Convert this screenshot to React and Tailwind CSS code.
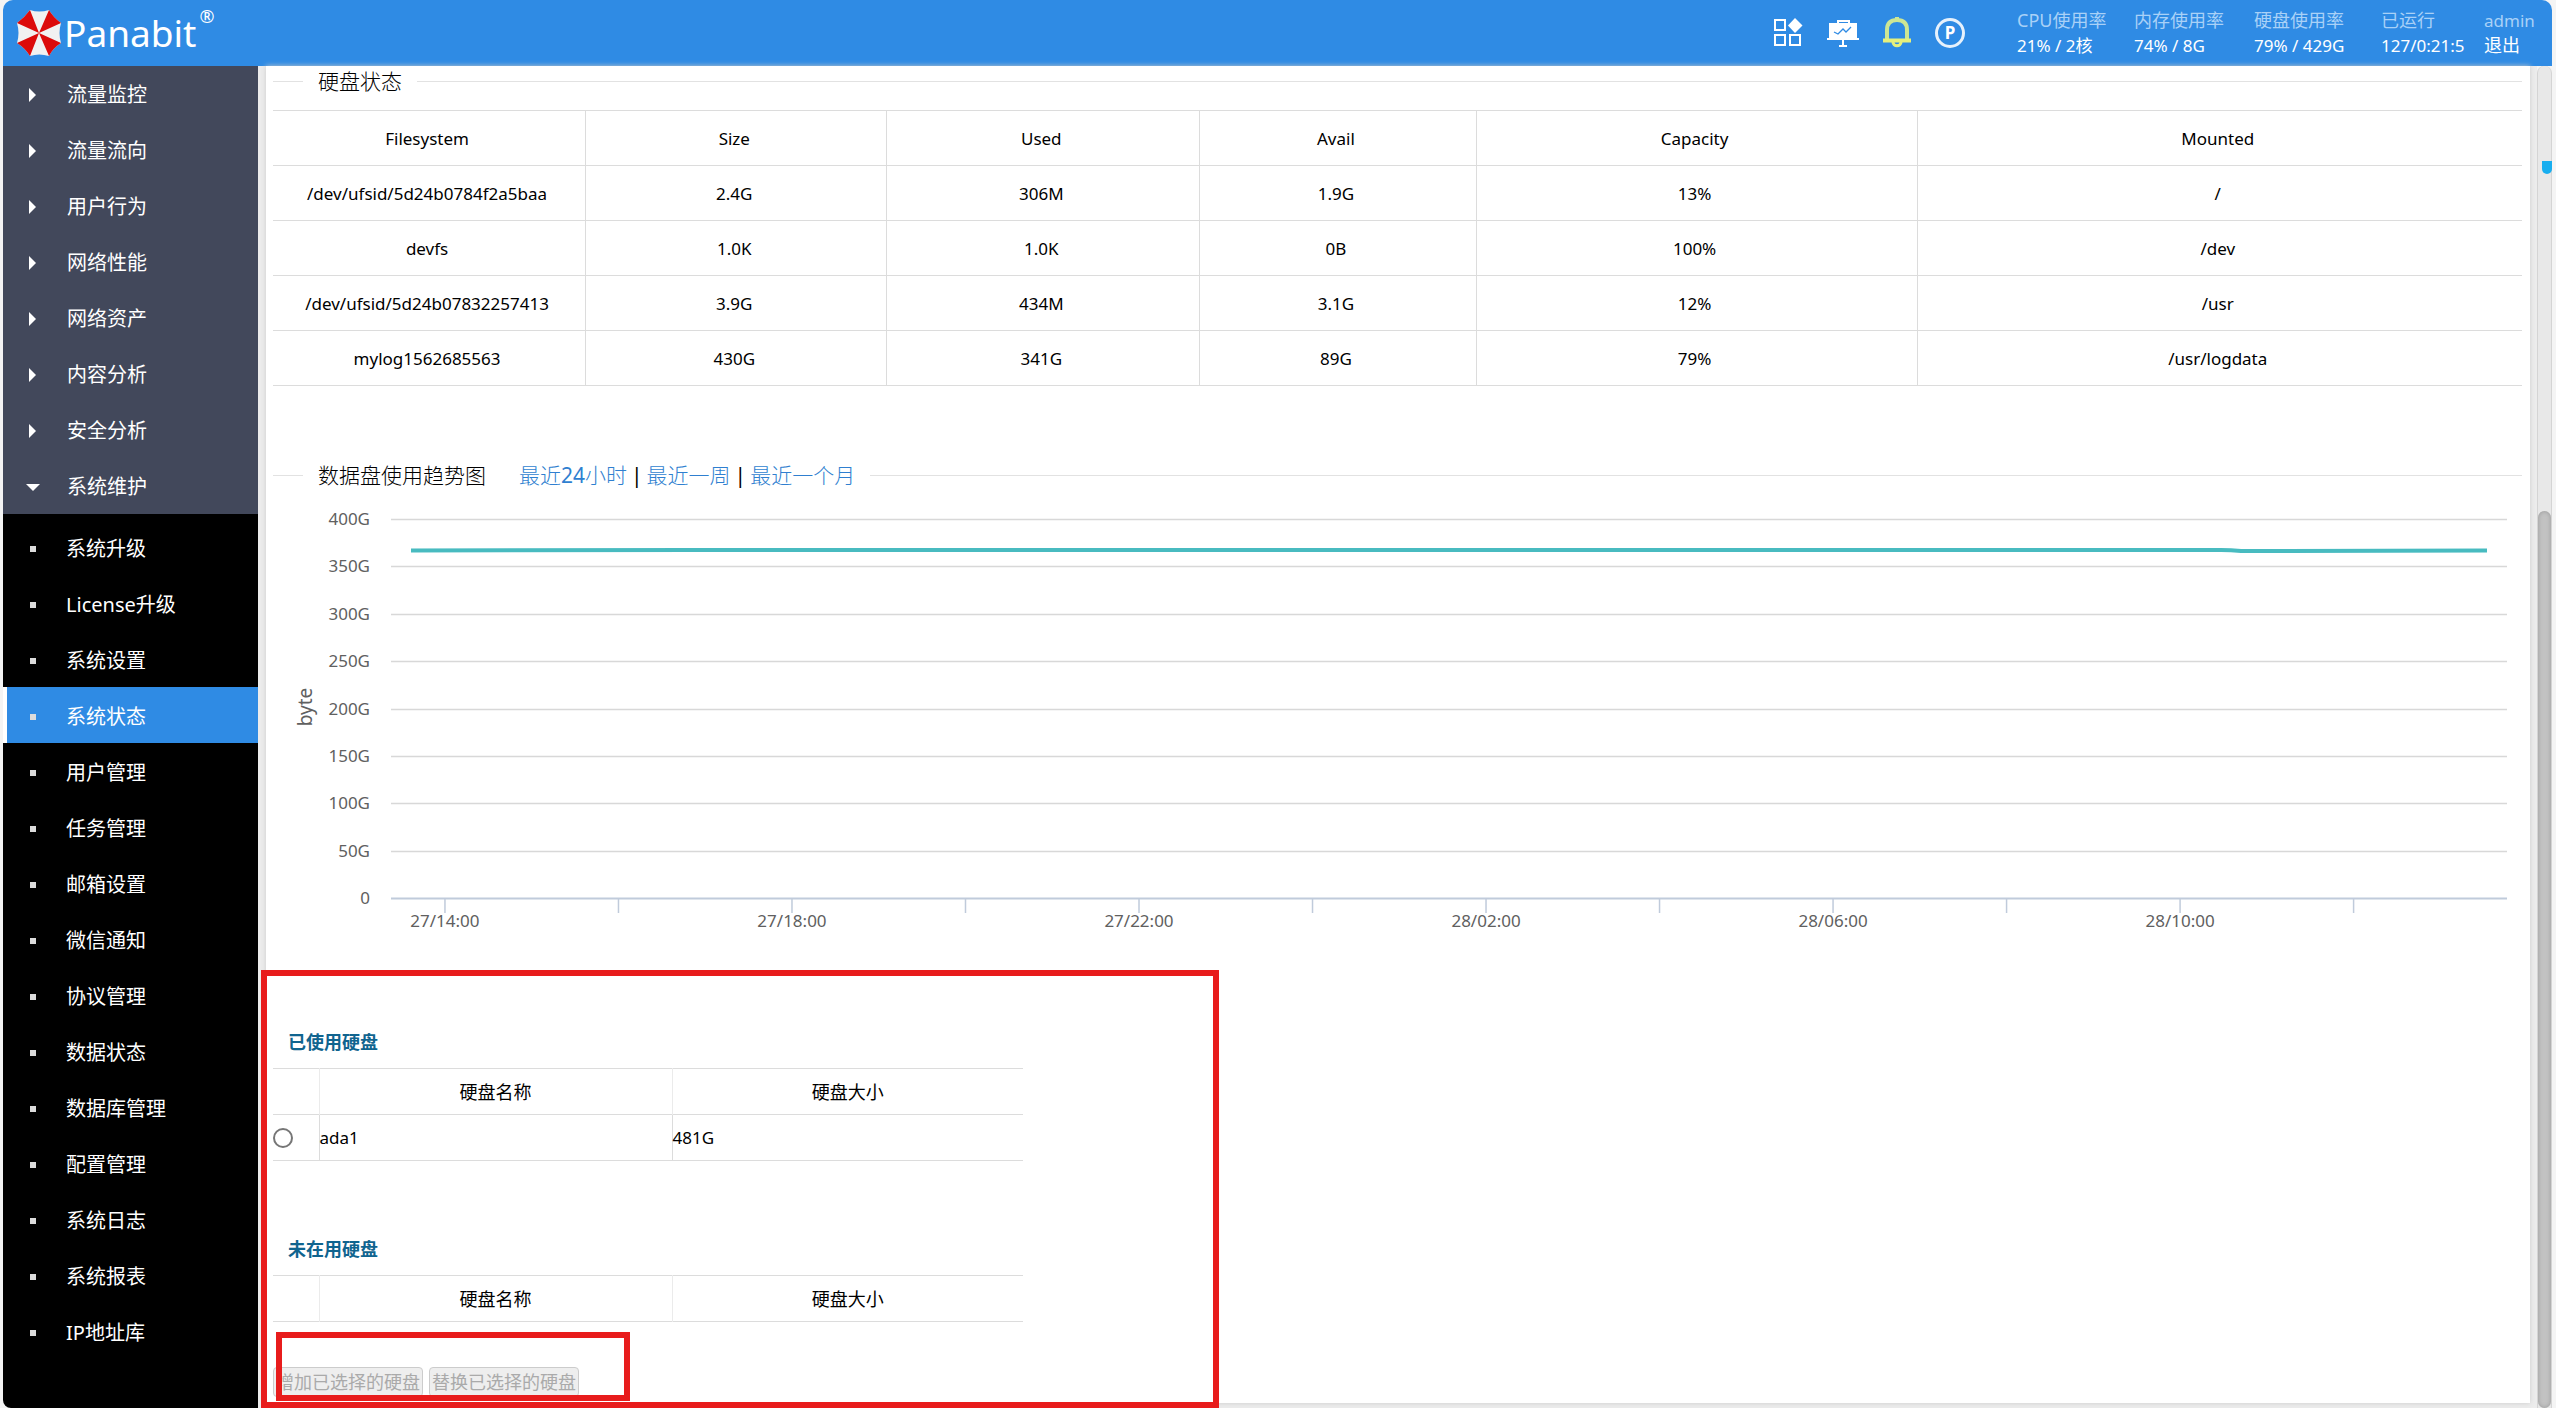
import { useState } from "react";

const menuGroups = ["流量监控", "流量流向", "用户行为", "网络性能", "网络资产", "内容分析", "安全分析", "系统维护"];

const subMenus = [
  "系统升级", "License升级", "系统设置", "系统状态", "用户管理", "任务管理", "邮箱设置", "微信通知",
  "协议管理", "数据状态", "数据库管理", "配置管理", "系统日志", "系统报表", "IP地址库",
];

const stats = [
  { label: "CPU使用率", value: "21% / 2核", width: "w-[117px]" },
  { label: "内存使用率", value: "74% / 8G", width: "w-[120px]" },
  { label: "硬盘使用率", value: "79% / 429G", width: "w-[127px]" },
  { label: "已运行", value: "127/0:21:5", width: "w-[103px]" },
];

const diskColumns = [
  { name: "Filesystem", width: "w-[13.9%]" },
  { name: "Size", width: "w-[13.4%]" },
  { name: "Used", width: "w-[13.9%]" },
  { name: "Avail", width: "w-[12.3%]" },
  { name: "Capacity", width: "w-[19.6%]" },
  { name: "Mounted", width: "" },
];

const diskRows = [
  ["/dev/ufsid/5d24b0784f2a5baa", "2.4G", "306M", "1.9G", "13%", "/"],
  ["devfs", "1.0K", "1.0K", "0B", "100%", "/dev"],
  ["/dev/ufsid/5d24b07832257413", "3.9G", "434M", "3.1G", "12%", "/usr"],
  ["mylog1562685563", "430G", "341G", "89G", "79%", "/usr/logdata"],
];

const yLabels = ["400G", "350G", "300G", "250G", "200G", "150G", "100G", "50G", "0"];
const xLabels = ["27/14:00", "", "27/18:00", "", "27/22:00", "", "28/02:00", "", "28/06:00", "", "28/10:00", ""];

// y of a grid line inside the chart
const gridY = (i) => Math.round(29 + i * 47.4) + 0.5;

function Logo() {
  return (
    <div className="flex items-center">
      <svg width="46" height="48" viewBox="0 0 46 48">
        <path d="M14 1Q23 4 33 1Q37 8 45 14Q42 24 45 34Q37 39 33 47Q23 44 14 47Q9 39 1 34Q4 24 1 14Q9 8 14 1Z" fill="#f1f1f1" />
        <g fill="#dc0a0a">
          <path d="M23 24L14 1Q9 8 1 14Z" />
          <path d="M23 24L33 1Q37 8 45 14Z" />
          <path d="M23 24L45 34Q37 39 33 47Z" />
          <path d="M23 24L1 34Q9 39 14 47Z" />
        </g>
      </svg>
      <span className="ml-[2px] text-[37px] leading-[48px]">Panabit</span>
      <span className="ml-[3px] self-start text-[18px] leading-[14px]">®</span>
    </div>
  );
}

function HeaderIcons() {
  return (
    <div className="flex items-center gap-[23px]">
      <button type="button" aria-label="应用">
        <svg width="31" height="32" viewBox="0 0 31 32" fill="none" stroke="#fff" strokeWidth="2">
          <rect x="2" y="3" width="10" height="10" />
          <rect x="2" y="18" width="10" height="10" />
          <rect x="17" y="18" width="10" height="10" />
          <path d="M22 1L29.500 8.500L22 16L15 8.500Z" fill="#fff" stroke="none" />
        </svg>
      </button>
      <button type="button" aria-label="大屏">
        <svg width="32" height="32" viewBox="0 0 32 32" fill="none">
          <path d="M11 6V4H22V6" stroke="#fff" strokeWidth="2" />
          <path d="M2 6H30V21H32V23H0V21H2Z" fill="#fff" />
          <path d="M16 23V29M12 29H20" stroke="#fff" strokeWidth="2" />
          <path d="M7 15L11 17L16 12L19 15L24 10" stroke="#2f8be4" strokeWidth="1.300" />
        </svg>
      </button>
      <button type="button" aria-label="告警">
        <svg width="30" height="32" viewBox="0 0 30 32" fill="none" stroke="#cde694">
          <path d="M5 23V13C5 6 9 3 15 3S25 6 25 13V23" strokeWidth="4" />
          <path d="M15 0V3" strokeWidth="4" />
          <path d="M1 23.500H29" stroke="#e6f07c" strokeWidth="4" />
          <path d="M11 25C11 30 19 30 19 25" stroke="#e6f07c" strokeWidth="3" />
        </svg>
      </button>
      <button type="button" aria-label="Panabit" className="size-[30px] rounded-full border-[3px] border-[#e6f1fc] text-[17px] leading-[24px] font-bold">
        P
      </button>
    </div>
  );
}

function Header() {
  return (
    <header className="flex h-[66px] items-center justify-between rounded-t-[10px] bg-[#2f8be4] pl-[13px] text-white">
      <Logo />
      <div className="flex items-center">
        <HeaderIcons />
        <dl className="ml-[52px] flex text-[18px] leading-[25px]">
          {stats.map((s) => (
            <div key={s.label} className={s.width}>
              <dt className="text-[#a9d1f7]">{s.label}</dt>
              <dd className="text-[17px]">{s.value}</dd>
            </div>
          ))}
        </dl>
        <div className="w-[68px] text-[17px] leading-[25px]">
          <div className="text-[#a9d1f7]">admin</div>
          <a href="#logout" className="text-[18px]">退出</a>
        </div>
      </div>
    </header>
  );
}

function Sidebar({ active, onSelect }) {
  return (
    <nav className="w-[255px] shrink-0 rounded-bl-[8px] bg-black text-[20px] text-white">
      <ul className="bg-[#42485b]">
        {menuGroups.map((name, i) => (
          <li key={name}>
            <button type="button" className="flex h-[56px] w-full items-center pt-[2px]">
              <span className="flex w-[64px] justify-center pr-[5px]">
                {i === menuGroups.length - 1 ? (
                  <svg width="14" height="7"><path d="M0 0H14L7 7Z" fill="#fff" /></svg>
                ) : (
                  <svg width="7" height="14"><path d="M0 0L7 7L0 14Z" fill="#fff" /></svg>
                )}
              </span>
              {name}
            </button>
          </li>
        ))}
      </ul>
      <ul className="py-[5px]">
        {subMenus.map((name) => (
          <li key={name}>
            <a
              href="#menu"
              onClick={() => onSelect(name)}
              className={
                name === active
                  ? "flex h-[56px] items-center border-l-4 border-white bg-[#2f8be4] pt-[3px]"
                  : "flex h-[56px] items-center border-l-4 border-black pt-[3px]"
              }
            >
              <span className="ml-[23px] mr-[30px] size-[6px] bg-[#dcdcdc]" />
              {name}
            </a>
          </li>
        ))}
      </ul>
    </nav>
  );
}

function SectionTitle({ title, children }) {
  return (
    <div className="flex h-[30px] items-center text-[21px] leading-[30px] font-light">
      <span className="h-px w-[30px] bg-[#e2e2e2]" />
      <h2 className="ml-[15px]">{title}</h2>
      {children}
      <span className="ml-[15px] h-px flex-1 bg-[#e2e2e2]" />
    </div>
  );
}

function DiskTable() {
  return (
    <table className="mt-[14px] w-full table-fixed border-collapse text-center text-[17px]">
      <thead>
        <tr className="h-[55px] border-y border-[#dcdcdc]">
          {diskColumns.map((c) => (
            <th key={c.name} className={`${c.width} border-r border-[#dcdcdc] pt-[2px] pr-[4px] font-normal last:border-r-0`}>{c.name}</th>
          ))}
        </tr>
      </thead>
      <tbody>
        {diskRows.map((row) => (
          <tr key={row[0]} className="h-[55px] border-b border-[#dcdcdc]">
            {row.map((cell, i) => (
              <td key={i} className="border-r border-[#dcdcdc] pt-[2px] pr-[4px] last:border-r-0">{cell}</td>
            ))}
          </tr>
        ))}
      </tbody>
    </table>
  );
}

function TrendChart() {
  return (
    <div className="flex h-[480px] text-[17px]">
      <svg width="118" height="480" fill="#606060">
        <text x="39" y="217" textAnchor="middle" fontSize="19" transform="rotate(-90 39 217)">byte</text>
        {yLabels.map((label, i) => (
          <text key={label} x="97" y={gridY(i) + 5} textAnchor="end">{label}</text>
        ))}
      </svg>
      <div className="mr-[15px] min-w-0 flex-1">
        <svg width="100%" height="480" className="overflow-visible">
          {yLabels.map((label, i) => (
            <line key={label} x1="0" x2="100%" y1={gridY(i)} y2={gridY(i)} stroke={label === "0" ? "#c0cbdb" : "#d8d8d8"} strokeWidth={label === "0" ? 2 : 1.5} />
          ))}
          {xLabels.map((label, i) => {
            const x = `${2.55 + i * 8.2}%`;
            return (
              <g key={i}>
                <line x1={x} x2={x} y1="408" y2="423" stroke="#c0cbdb" strokeWidth="1.500" />
                <text x={x} y="437" textAnchor="middle" fill="#606060">{label}</text>
              </g>
            );
          })}
          <svg width="100%" height="480" viewBox="0 0 2116 480" preserveAspectRatio="none">
            <path d="M20 60.500L300 60H1830Q1840 60 1850 61L2096 60.500" fill="none" stroke="#48bbc0" strokeWidth="4" />
          </svg>
        </svg>
      </div>
    </div>
  );
}

function DiskPicker({ title, disks }) {
  return (
    <>
      <h3 className="mb-[8px] pl-[15px] text-[18px] leading-[36px] font-bold text-[#10648f]">{title}</h3>
      <table className="w-[750px] table-fixed border-collapse text-[18px]">
        <thead>
          <tr className="h-[46px] border-y border-[#dcdcdc]">
            <th className="w-[46px] border-r border-[#ebebeb]" aria-label="选择" />
            <th className="w-[353px] border-r border-[#ebebeb] pt-[2px] font-normal">硬盘名称</th>
            <th className="pt-[2px] font-normal">硬盘大小</th>
          </tr>
        </thead>
        <tbody className="text-[17px]">
          {disks.map((d) => (
            <tr key={d.name} className="h-[46px] border-b border-[#dcdcdc]">
              <td className="border-r border-[#dcdcdc]">
                <input
                  type="radio"
                  name="disk"
                  id={d.name}
                  className="block size-[20px] appearance-none rounded-full border-2 border-[#767676] checked:bg-[#767676]"
                />
              </td>
              <td className="border-r border-[#dcdcdc]"><label htmlFor={d.name}>{d.name}</label></td>
              <td>{d.size}</td>
            </tr>
          ))}
        </tbody>
      </table>
    </>
  );
}

function DiskManager() {
  const buttonClass = "h-[30px] w-[150px] rounded-[4px] border border-[#cccccc] bg-[#eeeeee] text-[18px] leading-[28px] whitespace-nowrap text-[#aaaaaa]";

  return (
    <section className="relative pt-[54px]">
      <DiskPicker title="已使用硬盘" disks={[{ name: "ada1", size: "481G" }]} />
      <div className="h-[70px]" />
      <DiskPicker title="未在用硬盘" disks={[]} />

      <div className="relative mt-[45px] flex gap-[6px]">
        <button type="button" disabled className={buttonClass}>增加已选择的硬盘</button>
        <button type="button" disabled className={buttonClass}>替换已选择的硬盘</button>
        <div className="pointer-events-none absolute -top-[35px] -bottom-[4px] left-[3px] w-[354px] border-[6px] border-[#e81c1c]" />
      </div>

      {/* highlight frame */}
      <div className="pointer-events-none absolute top-0 -bottom-[11px] -left-[12px] w-[958px] border-[6px] border-[#e81c1c]" />
    </section>
  );
}

function ScrollBar() {
  return (
    <div className="relative flex w-[15px] shrink-0 flex-col rounded-t-[7px] border-x border-[#d4d4d4] bg-[#e8e8e8]">
      <div className="h-[445px]" />
      <div className="flex-1 rounded-[7px] bg-[#c2c2c2] shadow-[inset_0_0_4px_#999999]" />
      <div className="absolute top-[95px] -right-px h-[13px] w-[10px] rounded-b-[5px] bg-[#18aeef]" />
    </div>
  );
}

function App() {
  const [active, setActive] = useState("系统状态");

  return (
    <div className="flex min-h-screen flex-col bg-[#f4f4f4] pr-[4px] pl-[3px] font-['Noto_Sans','Noto_Sans_CJK_SC',sans-serif] text-black">
      <Header />

      <div className="flex flex-1">
        <Sidebar active={active} onSelect={setActive} />

        {/* CONTENT */}
        <div className="flex min-w-0 flex-1 flex-col bg-[#ececec] pr-[7px] pb-[5px] pl-[8px]">
          <main className="flex-1 bg-white pr-[8px] pb-[6px] pl-[7px] shadow-[0_0_5px_#cccccc]">
            <SectionTitle title="硬盘状态" />
            <DiskTable />

            <div className="h-[74px]" />
            <SectionTitle title="数据盘使用趋势图">
              <div className="ml-[33px] flex gap-[4px] text-[#2f7fd0]">
                <a href="#day">最近<span className="font-normal">24</span>小时</a>
                <span className="font-normal text-black">|</span>
                <a href="#week">最近一周</a>
                <span className="font-normal text-black">|</span>
                <a href="#month">最近一个月</a>
              </div>
            </SectionTitle>
            <TrendChart />

            <DiskManager />
          </main>
        </div>

        <ScrollBar />
      </div>
    </div>
  );
}

export default App;
